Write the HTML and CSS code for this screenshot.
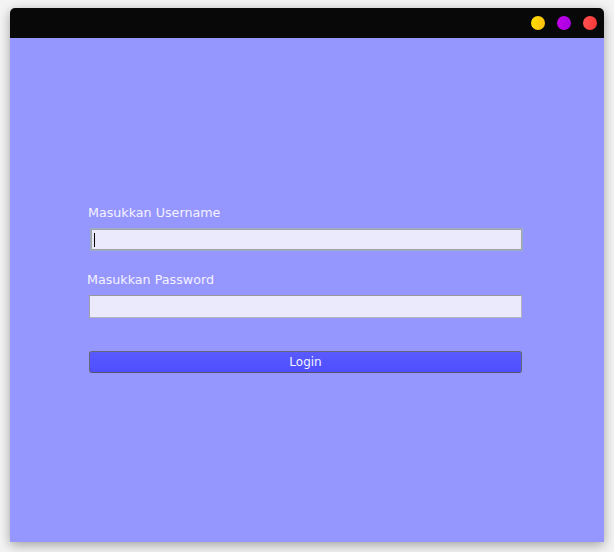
FILE: index.html
```html
<!DOCTYPE html>
<html>
<head>
<meta charset="utf-8">
<link rel="stylesheet" href="styles.css">
</head>
<body>
<div class="window">
  <div class="titlebar">
    <span class="dot dot-yellow"></span>
    <span class="dot dot-purple"></span>
    <span class="dot dot-red"></span>
  </div>
  <div class="content">
    <div class="label label-user">Masukkan Username</div>
    <div class="field field-user"><span class="caret"></span></div>
    <div class="label label-pass">Masukkan Password</div>
    <div class="field field-pass"></div>
    <div class="button">Login</div>
  </div>
</div>
</body>
</html>
```

FILE: styles.css
```css
html, body {
  margin: 0;
  padding: 0;
}
body {
  width: 614px;
  height: 552px;
  background: #f4f4f4;
  padding: 8px 10px 0 10px;
  box-sizing: border-box;
  font-family: "DejaVu Sans", sans-serif;
}
.window {
  width: 594px;
  height: 534px;
  border-radius: 5px 5px 0 0;
  overflow: hidden;
  box-shadow: 0 3px 12px rgba(0, 0, 0, 0.35);
  display: flex;
  flex-direction: column;
}
.titlebar {
  height: 30px;
  flex: 0 0 30px;
  background: #080808;
  display: flex;
  justify-content: flex-end;
  align-items: center;
  gap: 12px;
  padding-right: 7px;
}
.dot {
  width: 14px;
  height: 14px;
  border-radius: 50%;
}
.dot-yellow {
  background: linear-gradient(90deg, #ffe000, #ffbf10);
}
.dot-purple {
  background: linear-gradient(90deg, #c000e8, #a800e0);
}
.dot-red {
  background: linear-gradient(90deg, #ff5050, #ff3838);
}
.content {
  flex: 1;
  background: #9696ff;
  display: flex;
  flex-direction: column;
  align-items: flex-start;
  padding-top: 167px;
}
.label {
  color: #f4f2ff;
  font-size: 12.7px;
  line-height: 15px;
  height: 15px;
  white-space: nowrap;
}
.label-user {
  margin-left: 78px;
}
.label-pass {
  margin-left: 77px;
  margin-top: 21px;
}
.field {
  box-sizing: border-box;
  width: 433px;
  height: 23px;
  background: #ebe9fc;
  margin-top: 8px;
  display: flex;
  align-items: center;
}
.field-user {
  margin-left: 80px;
  border: 1px solid #9aaec8;
  box-shadow: inset 0 0 0 1px #a4a4a8;
  padding-left: 3px;
}
.field-pass {
  margin-left: 79px;
  border: 1px solid #b4b4c2;
  border-top-color: #98989c;
  border-left-color: #a2a2aa;
}
.caret {
  width: 1px;
  height: 14px;
  background: #000;
}
.button {
  box-sizing: border-box;
  margin-left: 79px;
  margin-top: 33px;
  width: 433px;
  height: 22px;
  border: 1px solid #66667a;
  border-bottom-color: #55556a;
  border-radius: 3px;
  background: linear-gradient(#5a5aff, #4e4eff);
  color: #f2f2ff;
  font-size: 12px;
  line-height: 20px;
  text-align: center;
}
```
